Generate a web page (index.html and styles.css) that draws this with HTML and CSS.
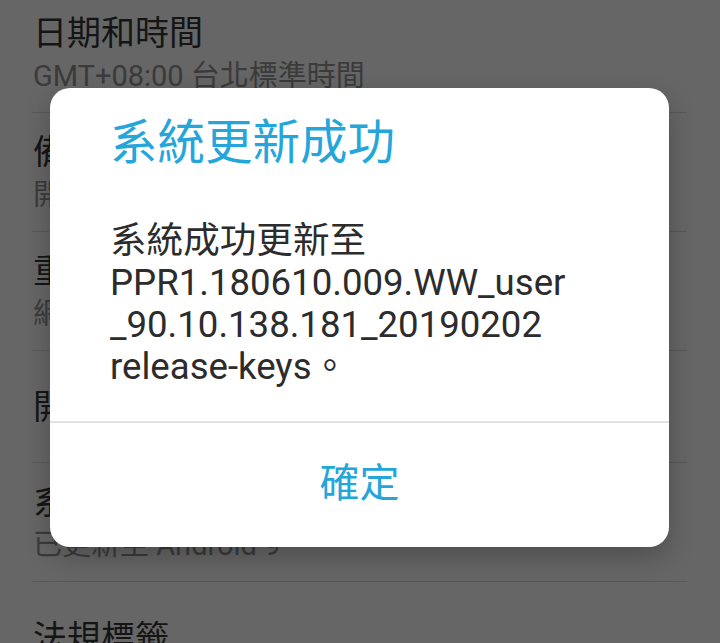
FILE: index.html
```html
<!DOCTYPE html>
<html lang="zh-Hant">
<head>
<meta charset="utf-8">
<title>系統更新成功</title>
<link rel="stylesheet" href="styles.css">
</head>
<body>
<div class="screen">
  <ul class="list">
    <li class="item"><div class="item-title">日期和時間</div><div class="item-summary">GMT+08:00 台北標準時間</div></li>
    <li class="item"><div class="item-title">備份</div><div class="item-summary">開啟</div></li>
    <li class="item"><div class="item-title">重設選項</div><div class="item-summary">網路、應用程式或裝置可以重設</div></li>
    <li class="item single"><div class="item-title">開發人員選項</div></li>
    <li class="item"><div class="item-title">系統更新</div><div class="item-summary">已更新至 Android 9</div></li>
    <li class="item single"><div class="item-title">法規標籤</div></li>
  </ul>

  <div class="dialog" role="dialog">
    <div class="dlg-content">
      <h1 class="dlg-title">系統更新成功</h1>
      <p class="dlg-msg">系統成功更新至<br>PPR1.180610.009.WW_user<br>_90.10.138.181_20190202<br>release-keys。</p>
    </div>
    <div class="dlg-actions">
      <button class="dlg-btn" type="button">確定</button>
    </div>
  </div>
</div>
</body>
</html>
```
FILE: styles.css
```css
html, body {
  margin: 0;
  padding: 0;
}

body {
  background: #666666;
  font-family: "Roboto", "Noto Sans CJK TC", sans-serif;
}

.screen {
  position: relative;
  width: 720px;
  height: 643px;
  overflow: hidden;
  background: #666666;
}

.list {
  list-style: none;
  margin: -6px 33px 0 32px;
  padding: 0;
}

.item {
  padding: 19px 0 19px 1px;
  border-bottom: 1px solid #585858;
  white-space: nowrap;
}

.item.single {
  padding: 36px 0 35px 1px;
}

.item-title {
  font-size: 34px;
  line-height: 40px;
  color: #151515;
}

.item-summary {
  margin-top: 6px;
  font-size: 29px;
  line-height: 34px;
  color: #3b3b3b;
}

.dialog {
  position: absolute;
  left: 50px;
  top: 88px;
  width: 619px;
  background: #ffffff;
  border-radius: 20px;
  box-shadow: 0 10px 28px rgba(0, 0, 0, 0.24);
  overflow: hidden;
}

.dlg-content {
  padding: 27px 60px 33px;
}

.dlg-title {
  margin: 0;
  font-weight: 400;
  font-size: 47.5px;
  line-height: 56px;
  color: #24a6da;
}

.dlg-msg {
  margin: 49px 0 0;
  font-size: 36.6px;
  line-height: 42px;
  color: #2c2c2c;
}

.dlg-actions {
  border-top: 2px solid #e2e2e2;
  height: 126px;
  display: flex;
  align-items: center;
  justify-content: center;
  box-sizing: border-box;
  padding-bottom: 3px;
}

.dlg-btn {
  border: 0;
  background: transparent;
  padding: 0;
  font-family: "Roboto", "Noto Sans CJK TC", sans-serif;
  font-size: 40px;
  line-height: 47px;
  color: #24a6da;
}
```
